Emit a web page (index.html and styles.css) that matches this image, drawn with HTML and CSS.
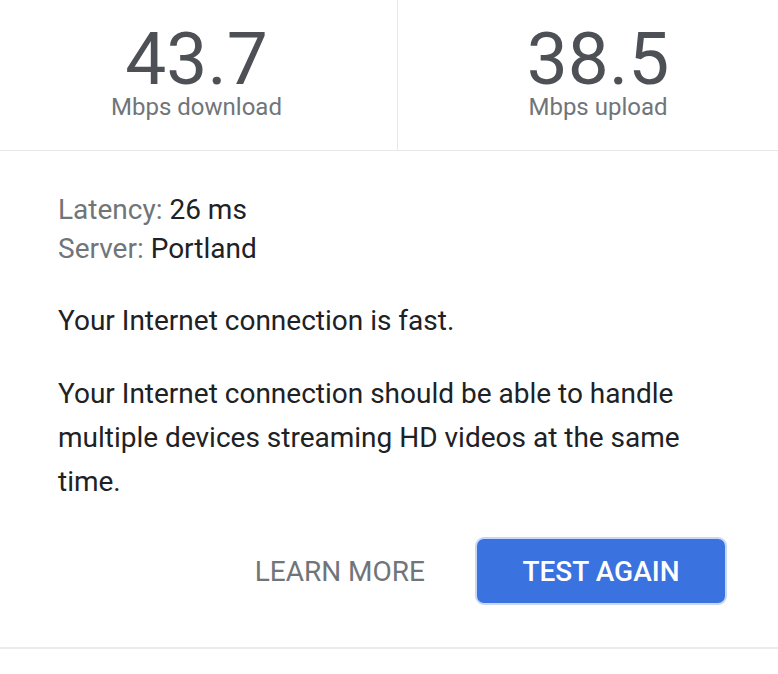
FILE: index.html
```html
<!DOCTYPE html>
<html lang="en">
<head>
<meta charset="utf-8">
<title>Speed test</title>
<link rel="stylesheet" href="styles.css">
</head>
<body>
<div class="card">
  <div class="speeds">
    <div class="speed speed-down">
      <div class="value">43.7</div>
      <div class="unit">Mbps download</div>
    </div>
    <div class="speed speed-up">
      <div class="value">38.5</div>
      <div class="unit">Mbps upload</div>
    </div>
  </div>
  <div class="details">
    <div class="meta">
      <div><span class="label">Latency:</span> 26 ms</div>
      <div><span class="label">Server:</span> Portland</div>
    </div>
    <p class="summary">Your Internet connection is fast.</p>
    <p class="desc">Your Internet connection should be able to handle multiple devices streaming HD videos at the same time.</p>
    <div class="actions">
      <span class="learn">LEARN MORE</span>
      <button class="again" type="button">TEST AGAIN</button>
    </div>
  </div>
</div>
</body>
</html>
```
FILE: styles.css
```css
html, body {
  margin: 0;
  padding: 0;
  background: #ffffff;
}
body {
  font-family: Roboto, "Liberation Sans", Arial, sans-serif;
  color: #202124;
  overflow: hidden;
}
.card {
  width: 778px;
}
.speeds {
  display: grid;
  grid-template-columns: 397px 1fr;
  height: 150px;
  border-bottom: 1px solid #e8e8e8;
}
.speed {
  text-align: center;
  padding-top: 29px;
}
.speed-down {
  padding-right: 4px;
}
.speed-up {
  border-left: 1px solid #e8e8e8;
  padding-left: 20px;
}
.value {
  font-size: 73px;
  line-height: 60px;
  color: #4d5156;
}
.unit {
  margin-top: 5px;
  font-size: 24px;
  line-height: 26px;
  color: #70757a;
}
.details {
  padding: 39px 51px 42px 58px;
  border-bottom: 2px solid #ebebeb;
  font-size: 28px;
}
.meta {
  line-height: 39px;
}
.label {
  color: #70757a;
}
.summary {
  margin: 31px 0 0;
  line-height: 44px;
}
.desc {
  margin: 29px 0 0;
  line-height: 44px;
  max-width: 650px;
}
.actions {
  display: flex;
  justify-content: flex-end;
  align-items: center;
  margin-top: 33px;
}
.learn {
  font-size: 28px;
  color: #70757a;
  margin-right: 50px;
}
.again {
  width: 252px;
  height: 68px;
  box-sizing: border-box;
  border: 2px solid #c8d7f5;
  border-radius: 9px;
  background: #3a72df;
  color: #ffffff;
  font-family: Roboto, "Liberation Sans", Arial, sans-serif;
  font-size: 28px;
  font-weight: 500;
  padding: 0;
}
```
